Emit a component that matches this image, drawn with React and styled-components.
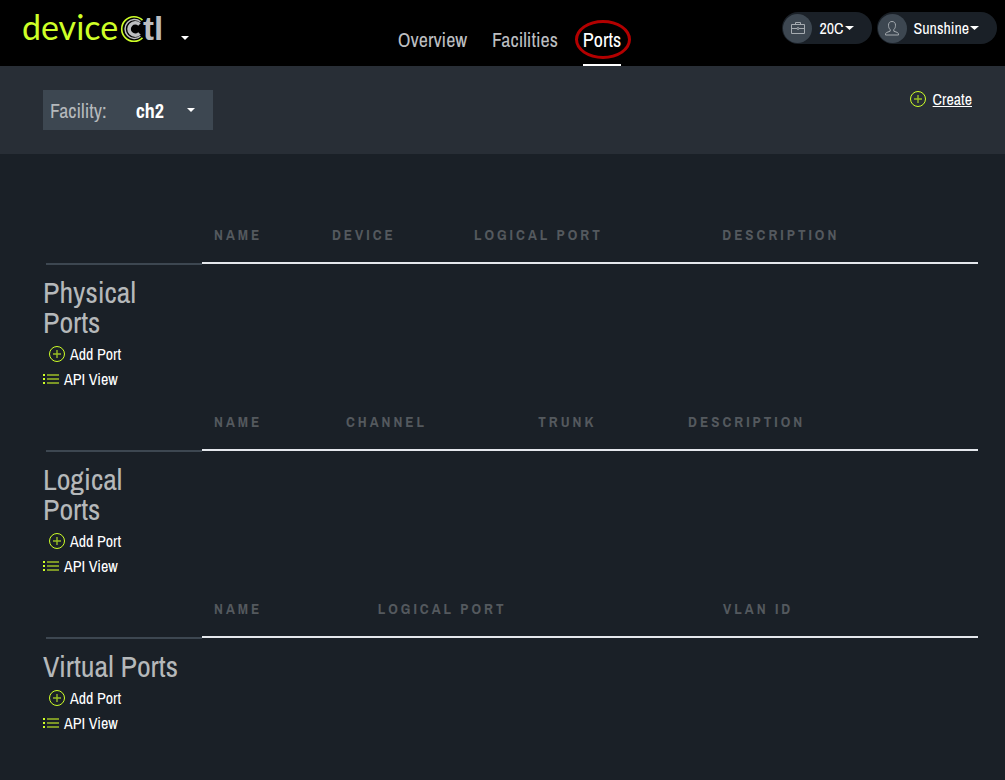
import React from 'react';
import styled, { createGlobalStyle } from 'styled-components';

const GlobalStyle = createGlobalStyle`
  *, *::before { box-sizing: border-box; }
  body {
    margin: 0;
    background: #1a2027;
    color: #fff;
    font-family: "Archivo Narrow", "Liberation Sans Narrow", "Liberation Sans", sans-serif;
    font-size: 16px;
  }
  a { color: inherit; text-decoration: none; }
  button, select { font: inherit; color: inherit; border: 0; cursor: pointer; }
`;

const TopBar = styled.header`
  display: grid;
  grid-template-columns: 1fr auto 1fr;
  height: 66px;
  padding: 0 8px 0 22px;
  background: #000;
`;

const Brand = styled.button`
  display: flex;
  align-items: flex-start;
  justify-self: start;
  gap: 16px;
  padding: 4px 0 0;
  background: none;
`;

const BrandCaret = styled.span`
  display: flex;
  padding-top: 32px;
`;

const Nav = styled.nav`
  display: flex;
  gap: 25px;
`;

const NavLink = styled.a`
  position: relative;
  display: flex;
  align-items: center;
  height: 66px;
  padding-top: 14px;
  border-bottom: 2px solid ${(p) => (p.$active ? '#fff' : 'transparent')};
  color: ${(p) => (p.$active ? '#fff' : '#bcbec0')};
  font-size: 20px;
`;

const Ring = styled.span`
  position: absolute;
  top: 20px;
  left: -8px;
  right: -10px;
  height: 39px;
  border: 3px solid #b30000;
  border-radius: 50%;
`;

const Account = styled.div`
  display: flex;
  justify-content: flex-end;
  gap: 5px;
  padding-top: 12px;
`;

const Pill = styled.button`
  display: flex;
  align-items: center;
  gap: 1px;
  height: 32px;
  padding: 0 18px 0 1px;
  border-radius: 16px;
  background: #1a2027;
  white-space: nowrap;
`;

const PillIcon = styled.span`
  display: flex;
  align-items: center;
  justify-content: center;
  width: 29px;
  height: 29px;
  margin-right: 6px;
  border-radius: 50%;
  background: #3d4751;
`;

const Toolbar = styled.section`
  display: flex;
  align-items: flex-start;
  justify-content: space-between;
  padding: 24px 33px 24px 43px;
  background: #282e36;
`;

const Facility = styled.label`
  display: flex;
  align-items: center;
  height: 40px;
  padding: 0 18px 0 7px;
  background: #3d4751;
  color: #b5b9bc;
  font-size: 20px;
`;

const FacilitySelect = styled.select`
  appearance: none;
  width: 51px;
  margin-left: 29px;
  padding: 0;
  background: none;
  color: #fff;
  font-weight: 700;
`;

const Action = styled.a`
  display: flex;
  align-items: center;
  gap: ${(p) => p.$gap}px;
  height: ${(p) => (p.$compact ? 18 : 25)}px;
  padding-left: ${(p) => (p.$inset ? 6 : 0)}px;
  color: #fff;
  span { text-decoration: ${(p) => (p.$underline ? 'underline' : 'none')}; }
`;

const Main = styled.main`
  padding: 52px 27px 30px 43px;
`;

const Section = styled.section`
  display: grid;
  grid-template-columns: 159px 1fr;
  align-items: start;
  padding-bottom: 2px;
`;

const Side = styled.div`
  &::before {
    content: "";
    display: block;
    height: 59px;
    margin-left: 3px;
    border-bottom: 2px solid #3d4751;
  }
`;

const Title = styled.h2`
  margin: 12px 20px 4px 0;
  color: #b5b8ba;
  font-size: 30px;
  font-weight: 400;
  line-height: 30px;
`;

const Table = styled.table`
  width: 100%;
  table-layout: fixed;
  border-collapse: separate;
  border-spacing: 0;
`;

const HeadCell = styled.th`
  width: ${(p) => p.$width};
  height: 58px;
  padding: 0 0 0 12px;
  border-bottom: 2px solid #e4e7ec;
  color: #54595e;
  font-size: 15px;
  font-weight: 700;
  letter-spacing: 3px;
  text-align: left;
  text-transform: uppercase;
  white-space: nowrap;
`;

const Caret = ({ size = 8 }) => (
  <svg width={size} height="4" viewBox="0 0 8 4" preserveAspectRatio="none" aria-hidden="true">
    <path d="M0 0h8L4 4z" fill="#fff" />
  </svg>
);

const PlusIcon = () => (
  <svg width="16" height="16" viewBox="0 0 16 16" fill="none" aria-hidden="true">
    <circle cx="8" cy="8" r="7.5" stroke="#ceff27" />
    <path d="M8 4v8M4 8h8" stroke="#98bd25" strokeWidth="1.4" />
  </svg>
);

const ListIcon = () => (
  <svg width="16" height="10" viewBox="0 0 16 10" aria-hidden="true">
    <path d="M0 0h2v2H0zM0 4h2v2H0zM0 8h2v2H0z" fill="#ceff27" />
    <path d="M4 0h12v2H4zM4 4h12v2H4zM4 8h12v2H4z" fill="#7c9626" />
  </svg>
);

const BriefcaseIcon = () => (
  <svg width="14" height="14" viewBox="0 0 14 14" fill="none" stroke="#a5abb0" aria-hidden="true">
    <path d="M.5 3.500h13v9H.5zM4.500 3.500v-2h5v2M.5 7.500H6M8 7.500h5.500" />
    <circle cx="7" cy="7.5" r="1" />
  </svg>
);

const UserIcon = () => (
  <svg width="14" height="15" viewBox="0 0 14 15" fill="none" stroke="#a5abb0" aria-hidden="true">
    <path d="M7 .5C4.700.5 3.500 2 3.500 4.200c0 2 .6 3.400 1.700 4.400v1.600L1.800 11.400C.8 11.800.5 12.600.5 14h13c0-1.400-.3-2.200-1.300-2.600l-3.400-1.200V8.600c1.100-1 1.700-2.400 1.700-4.400C10.500 2 9.300.5 7 .5z" />
  </svg>
);

const Logo = () => (
  <svg width="143" height="50" viewBox="0 0 143 50" role="img" aria-label="deviceCtl">
    <text x="0" y="36" fill="#ceff27" fontFamily="Lato, sans-serif" fontWeight="400" fontSize="34">device</text>
    <g fill="none" transform="translate(-1 8)">
      <path d="M121.500 8.100A12.300 12.300 0 1 0 121.500 25.900" stroke="#ceff27" strokeWidth="1.600" />
      <path d="M119.500 9.800A9.400 9.400 0 1 0 119.500 24.200" stroke="#bcbec0" strokeWidth="1.500" />
      <path d="M118.500 12.500A6.200 6.200 0 1 0 118.500 21.500" stroke="#bcbec0" strokeWidth="3.600" />
    </g>
    <text x="121" y="36" fill="#bcbec0" fontFamily="Liberation Sans, sans-serif" fontWeight="700" fontSize="33">tl</text>
  </svg>
);

const sections = [
  {
    title: 'Physical Ports',
    columns: [['Name', '15.2%'], ['Device', '18.3%'], ['Logical Port', '32%'], ['Description', 'auto']],
  },
  {
    title: 'Logical Ports',
    columns: [['Name', '17%'], ['Channel', '24.8%'], ['Trunk', '19.3%'], ['Description', 'auto']],
  },
  {
    title: 'Virtual Ports',
    columns: [['Name', '21.1%'], ['Logical Port', '44.5%'], ['VLAN ID', 'auto']],
  },
];

export default function App() {
  return (
    <>
      <GlobalStyle />
      <TopBar>
        <Brand type="button">
          <Logo />
          <BrandCaret><Caret /></BrandCaret>
        </Brand>
        <Nav>
          <NavLink href="#overview">Overview</NavLink>
          <NavLink href="#facilities">Facilities</NavLink>
          <NavLink href="#ports" $active aria-current="page">Ports<Ring /></NavLink>
        </Nav>
        <Account>
          <Pill type="button">
            <PillIcon><BriefcaseIcon /></PillIcon>20C<Caret size={9} />
          </Pill>
          <Pill type="button">
            <PillIcon><UserIcon /></PillIcon>Sunshine<Caret size={9} />
          </Pill>
        </Account>
      </TopBar>
      <Toolbar>
        <Facility>
          Facility:
          <FacilitySelect defaultValue="ch2">
            <option value="ch2">ch2</option>
          </FacilitySelect>
          <Caret />
        </Facility>
        <Action href="#create" $gap={7} $underline $compact>
          <PlusIcon /><span>Create</span>
        </Action>
      </Toolbar>
      <Main>
        {sections.map((s) => (
          <Section key={s.title}>
            <Side>
              <Title>{s.title}</Title>
              <Action href="#add" $gap={5} $inset><PlusIcon /><span>Add Port</span></Action>
              <Action href="#api" $gap={5}><ListIcon /><span>API View</span></Action>
            </Side>
            <Table>
              <thead>
                <tr>
                  {s.columns.map(([name, width]) => (
                    <HeadCell key={name} scope="col" $width={width}>{name}</HeadCell>
                  ))}
                </tr>
              </thead>
            </Table>
          </Section>
        ))}
      </Main>
    </>
  );
}
